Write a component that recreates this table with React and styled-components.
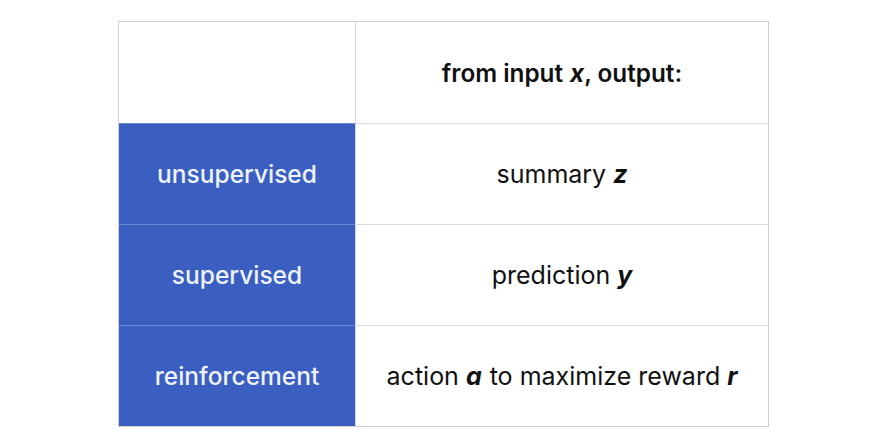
import React from 'react';
import styled, { createGlobalStyle } from 'styled-components';

const Global = createGlobalStyle`
  html, body { margin: 0; padding: 0; background: #ffffff; }
  body { font-family: Inter, "Liberation Sans", Arial, sans-serif; }
`;

const Page = styled.div`
  width: 876px;
  height: 440px;
  padding: 21px 0 0 118px;
  box-sizing: border-box;
`;

const Table = styled.div`
  display: grid;
  grid-template-columns: 236px 1fr;
  grid-template-rows: repeat(4, 101px);
  width: 651px;
  border: 1px solid #cfcfcf;
  box-sizing: border-box;
`;

const Cell = styled.div`
  display: flex;
  align-items: center;
  justify-content: center;
  font-size: 25px;
  color: #111;
  background: ${p => (p.$blue ? '#3a5fc0' : '#ffffff')};
  border-top: ${p => (p.$first ? 'none' : p.$blue ? '1px solid #6f8bd4' : '1px solid #dcdcdc')};
  border-left: ${p => (p.$right ? '1px solid #d6d6d6' : 'none')};
  ${p => p.$blue && 'color: #eef3ff; font-weight: 500; font-size: 24.5px;'}
  ${p => p.$head && 'font-weight: 600; font-size: 24.3px;'}
`;

const Var = styled.i`
  font-weight: 700;
  margin-left: 7px;
`;

const Gap = styled.span`
  margin-left: 8px;
`;

const rows = [
  { label: 'unsupervised', pre: 'summary', v: 'z' },
  { label: 'supervised', pre: 'prediction', v: 'y' },
  { label: 'reinforcement', pre: 'action', v: 'a', post: 'to maximize reward', v2: 'r' },
];

export default function App() {
  return (
    <Page>
      <Global />
      <Table>
        <Cell $first />
        <Cell $first $right $head>
          from input<Var>x</Var>, output:
        </Cell>
        {rows.map(r => (
          <React.Fragment key={r.label}>
            <Cell $blue>{r.label}</Cell>
            <Cell $right>
              {r.pre}
              <Var>{r.v}</Var>
              {r.post && <Gap>{r.post}</Gap>}
              {r.v2 && <Var>{r.v2}</Var>}
            </Cell>
          </React.Fragment>
        ))}
      </Table>
    </Page>
  );
}
